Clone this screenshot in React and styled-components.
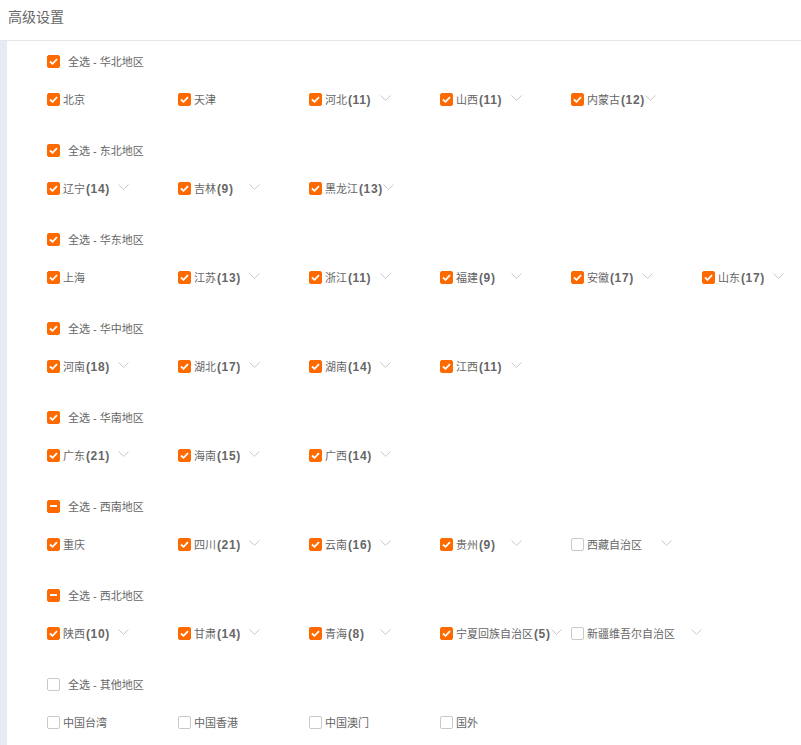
import React from 'react';
import styled, { createGlobalStyle } from 'styled-components';

const GlobalStyle = createGlobalStyle`
  body {
    margin: 0;
    background: #fff;
    font-family: "Liberation Sans", "Noto Sans CJK SC", sans-serif;
  }
`;

const regions = [
  { name: '华北地区', state: 'all', items: [
    { n: '北京', s: 1 }, { n: '天津', s: 1 }, { n: '河北', c: 11, s: 1 }, { n: '山西', c: 11, s: 1 }, { n: '内蒙古', c: 12, s: 1 },
  ] },
  { name: '东北地区', state: 'all', items: [
    { n: '辽宁', c: 14, s: 1 }, { n: '吉林', c: 9, s: 1 }, { n: '黑龙江', c: 13, s: 1 },
  ] },
  { name: '华东地区', state: 'all', items: [
    { n: '上海', s: 1 }, { n: '江苏', c: 13, s: 1 }, { n: '浙江', c: 11, s: 1 }, { n: '福建', c: 9, s: 1 }, { n: '安徽', c: 17, s: 1 }, { n: '山东', c: 17, s: 1 },
  ] },
  { name: '华中地区', state: 'all', items: [
    { n: '河南', c: 18, s: 1 }, { n: '湖北', c: 17, s: 1 }, { n: '湖南', c: 14, s: 1 }, { n: '江西', c: 11, s: 1 },
  ] },
  { name: '华南地区', state: 'all', items: [
    { n: '广东', c: 21, s: 1 }, { n: '海南', c: 15, s: 1 }, { n: '广西', c: 14, s: 1 },
  ] },
  { name: '西南地区', state: 'some', items: [
    { n: '重庆', s: 1 }, { n: '四川', c: 21, s: 1 }, { n: '云南', c: 16, s: 1 }, { n: '贵州', c: 9, s: 1 }, { n: '西藏自治区', s: 0, more: true },
  ] },
  { name: '西北地区', state: 'some', items: [
    { n: '陕西', c: 10, s: 1 }, { n: '甘肃', c: 14, s: 1 }, { n: '青海', c: 8, s: 1 }, { n: '宁夏回族自治区', c: 5, s: 1 }, { n: '新疆维吾尔自治区', s: 0, more: true },
  ] },
  { name: '其他地区', state: 'none', items: [
    { n: '中国台湾', s: 0 }, { n: '中国香港', s: 0 }, { n: '中国澳门', s: 0 }, { n: '国外', s: 0 },
  ] },
];

const Header = styled.div`
  height: 41px;
  padding: 0 0 9px 8px;
  display: flex;
  align-items: center;
  font-size: 14px;
  color: #666;
  border-bottom: 1px solid #e6e6e6;
  box-sizing: border-box;
`;

const Body = styled.div`
  border-left: 7px solid #e8ebf3;
  padding-left: 40px;
`;

const Group = styled.div`
  padding: 12px 0 23px;
`;

const GroupHead = styled.div`
  height: 16px;
  display: flex;
  align-items: center;
  gap: 8px;
  font-size: 11px;
  color: #666;
`;

const Row = styled.div`
  margin-top: 22px;
  display: grid;
  grid-template-columns: repeat(6, 131px);
  height: 16px;
`;

const Item = styled.div`
  display: flex;
  align-items: center;
  white-space: nowrap;
`;

const LabelBox = styled.div`
  display: flex;
  align-items: center;
  min-width: 71px;
  padding-right: ${p => (p.$pad ? '19px' : '0')};
  font-size: 11px;
  color: #666;
`;

const Name = styled.span`
  margin-left: 3px;
`;

const Count = styled.span`
  font-weight: 700;
  font-size: 12px;
  margin-left: 1px;
  letter-spacing: 0.6px;
`;

const Box = styled.span`
  width: 13px;
  height: 13px;
  box-sizing: border-box;
  border-radius: 2px;
  flex: none;
  display: inline-flex;
  align-items: center;
  justify-content: center;
  background: ${p => (p.$on ? '#ff6a00' : '#fff')};
  border: 1px solid ${p => (p.$on ? '#ff6a00' : '#c9c9c9')};
`;

const Bar = styled.span`
  width: 7px;
  height: 2px;
  background: #fff;
`;

const Chevron = styled.svg`
  width: 11px;
  height: 6px;
  flex: none;
  margin-top: -2px;
`;

function Check({ state }) {
  if (state === 'all' || state === 1) {
    return (
      <Box $on>
        <svg width="9" height="7" viewBox="0 0 9 7">
          <path d="M1 3.5 L3.5 5.8 L8 1.2" fill="none" stroke="#fff" strokeWidth="1.8" />
        </svg>
      </Box>
    );
  }
  if (state === 'some') {
    return <Box $on><Bar /></Box>;
  }
  return <Box />;
}

function Arrow() {
  return (
    <Chevron viewBox="0 0 11 6">
      <path d="M0.5 0.5 L5.5 5.3 L10.5 0.5" fill="none" stroke="#c8c8c8" strokeWidth="1" />
    </Chevron>
  );
}

export default function App() {
  return (
    <>
      <GlobalStyle />
      <Header>高级设置</Header>
      <Body>
        {regions.map(r => (
          <Group key={r.name}>
            <GroupHead>
              <Check state={r.state} />
              <span>全选 - {r.name}</span>
            </GroupHead>
            <Row>
              {r.items.map(it => {
                const hasArrow = it.c !== undefined || it.more;
                return (
                  <Item key={it.n}>
                    <LabelBox $pad={it.more}>
                      <Check state={it.s} />
                      <Name>
                        {it.n}
                        {it.c !== undefined && <Count>({it.c})</Count>}
                      </Name>
                    </LabelBox>
                    {hasArrow && <Arrow />}
                  </Item>
                );
              })}
            </Row>
          </Group>
        ))}
      </Body>
    </>
  );
}
